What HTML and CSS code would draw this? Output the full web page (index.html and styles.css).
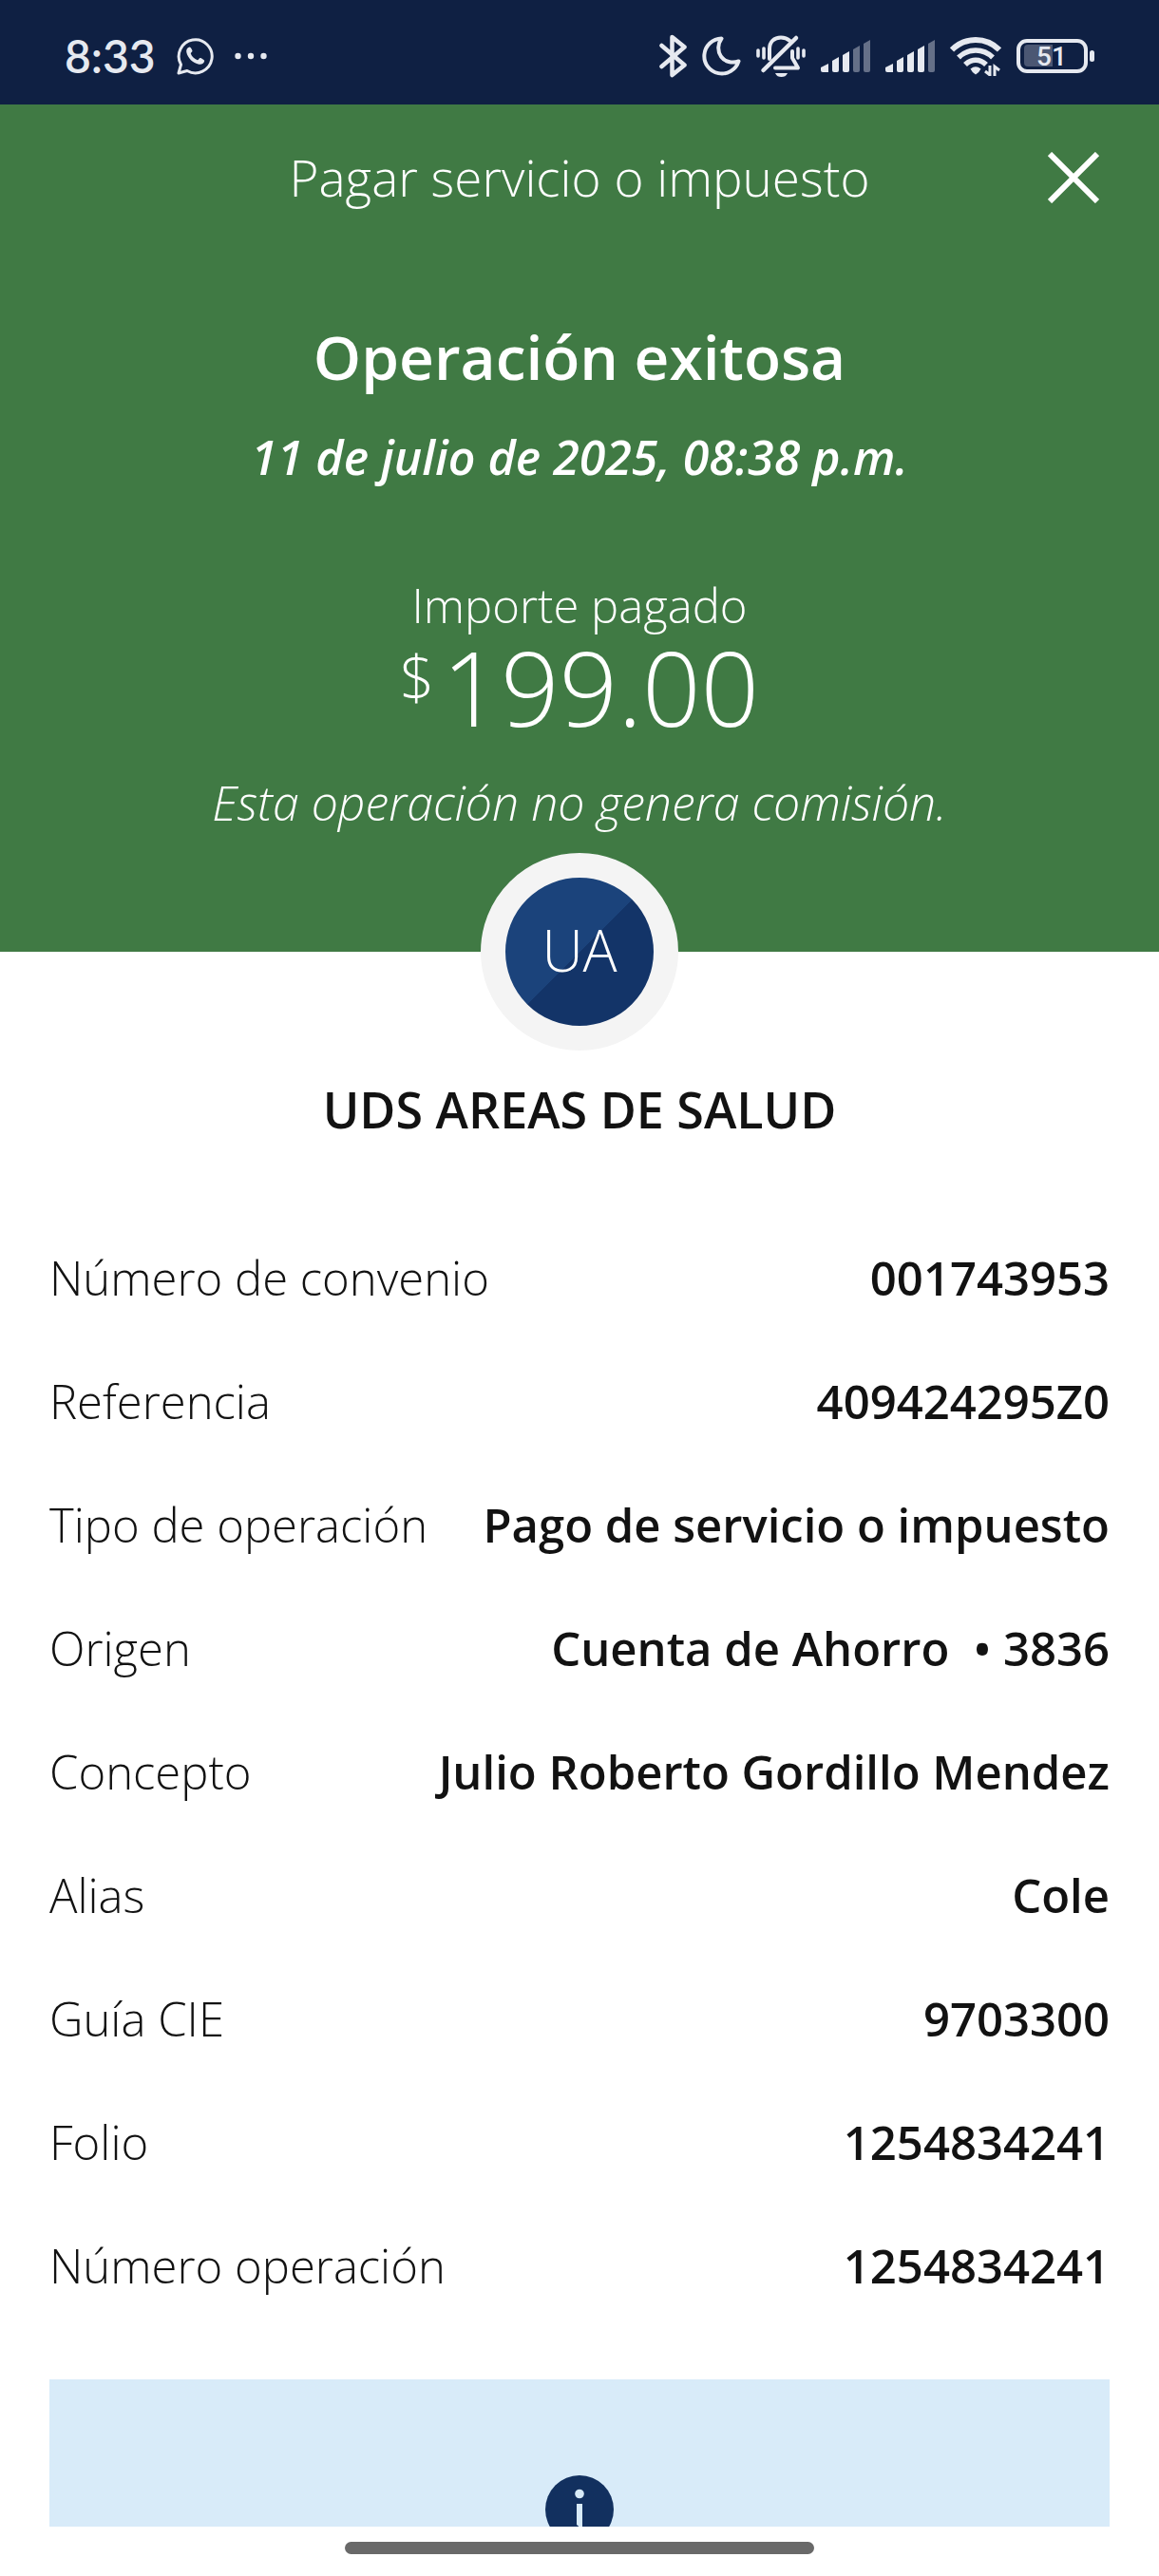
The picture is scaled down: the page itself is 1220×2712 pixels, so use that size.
FILE: index.html
```html
<!DOCTYPE html>
<html lang="es">
<head>
    <meta charset="UTF-8">
    <meta name="viewport" content="width=device-width, initial-scale=1.0">
    <title>Pagar servicio o impuesto</title>
    <link rel="stylesheet" href="styles.css">
</head>
<body>
    <div class="screen">
        <div class="status-bar">
            <div class="status-left">
                <span class="clock">8:33</span>
                <!-- WhatsApp -->
                <svg width="39" height="40" viewBox="0 0 39 40" fill="none">
                    <path d="M2 38L4.5 29A17.5 17.5 0 1 1 11 35.5Z" stroke="currentColor" stroke-width="3" stroke-linejoin="round"/>
                    <path d="M13.5 10.5C11 11 9.8 13.5 10.3 16C11.5 22 17 27.5 23.5 28.8C26.5 29.2 29 27.5 29.2 25C29.2 24 25.5 21.8 24.5 22C23.5 22.3 22.8 24.5 21.8 24.3C18.5 23 16 20.5 14.8 17.5C14.6 16.5 16.7 15.7 16.5 14.5C16.3 13.5 14.7 10.3 13.5 10.5Z" fill="currentColor"/>
                </svg>
                <svg class="dots" width="34" height="8" viewBox="0 0 34 8" fill="currentColor">
                    <circle cx="3.5" cy="4" r="3.2"/>
                    <circle cx="17" cy="4" r="3.2"/>
                    <circle cx="30.5" cy="4" r="3.2"/>
                </svg>
            </div>
            <div class="status-right">
                <!-- Bluetooth -->
                <svg width="29" height="46" viewBox="0 0 29 46" fill="none" stroke="currentColor" stroke-width="4.5" stroke-linecap="round" stroke-linejoin="round">
                    <path d="M2.5 12L26.5 32.5L13.5 43V3L26.5 13.5L2.5 34"/>
                </svg>
                <!-- Do not disturb -->
                <svg width="41" height="42" viewBox="0 0 41 42" fill="none" stroke="currentColor" stroke-width="4" stroke-linejoin="round">
                    <path d="M20.5 2.5A18.5 18.5 0 1 0 38.5 26.5C31.5 29 24 27 20 21.5C16 15.5 16.5 8 20.5 2.5Z"/>
                </svg>
                <!-- Muted bell -->
                <svg width="52" height="46" viewBox="0 0 52 46" fill="none" stroke="currentColor" stroke-linecap="round" stroke-linejoin="round">
                    <path d="M14 26V15.5C14 8 19 3.5 26 3.5C30 3.5 33 4.8 35.5 7" stroke-width="4"/>
                    <path d="M38 18V25L44 35.5H20" stroke-width="4"/>
                    <path d="M7.5 38L42 4" stroke-width="4.5"/>
                    <path d="M20 41H33C31.5 44 29.5 45 26.5 45C23.5 45 21.5 44 20 41Z" fill="currentColor" stroke="none"/>
                    <path d="M2 17V23M8 15V25M44 15V25M50 17V23" stroke-width="3.6"/>
                </svg>
                <!-- SIM 1 signal -->
                <svg width="52" height="34" viewBox="0 0 52 34" fill="currentColor">
                    <path d="M0 29L8 25V34H2Q0 34 0 32Z"/>
                    <path d="M12 22L19 18V32Q19 34 17 34H14Q12 34 12 32Z"/>
                    <path d="M23 16L30 12V32Q30 34 28 34H25Q23 34 23 32Z"/>
                    <path class="off" d="M34 10L41 6V32Q41 34 39 34H36Q34 34 34 32Z"/>
                    <path class="off" d="M45 4L52 0V32Q52 34 50 34H47Q45 34 45 32Z"/>
                </svg>
                <!-- SIM 2 signal -->
                <svg width="52" height="34" viewBox="0 0 52 34" fill="currentColor">
                    <path d="M0 29L8 25V34H2Q0 34 0 32Z"/>
                    <path d="M12 22L19 18V32Q19 34 17 34H14Q12 34 12 32Z"/>
                    <path d="M23 16L30 12V32Q30 34 28 34H25Q23 34 23 32Z"/>
                    <path d="M34 10L41 6V32Q41 34 39 34H36Q34 34 34 32Z"/>
                    <path class="off" d="M45 4L52 0V32Q52 34 50 34H47Q45 34 45 32Z"/>
                </svg>
                <!-- Wi-Fi -->
                <svg width="54" height="41" viewBox="0 0 54 41" fill="none" stroke="currentColor">
                    <path d="M2 13.5C16 -0.5 38 -0.5 52 13.5" stroke-width="6"/>
                    <path d="M9 21.5C19 11.5 35 11.5 45 21.5" stroke-width="5.5"/>
                    <path d="M16 29C22.5 22.5 31.5 22.5 38 29" stroke-width="5.5"/>
                    <path d="M21.5 33.5Q27 29 32.5 33.5Q31 37 27 39.5Q23 37 21.5 33.5Z" fill="currentColor" stroke="none"/>
                    <path d="M42 30V40L37 36M47 41V31L52 35" stroke-width="3"/>
                </svg>
                <!-- Battery -->
                <svg class="battery" width="82" height="36" viewBox="0 0 82 36">
                    <rect x="2" y="2" width="71" height="32" rx="9" fill="none" stroke="currentColor" stroke-width="4"/>
                    <path class="level" d="M12 6H38V29H12Q8 29 8 25V10Q8 6 12 6Z"/>
                    <rect x="77" y="12" width="5" height="12" rx="2.5" fill="currentColor"/>
                    <text x="37" y="28" text-anchor="middle" fill="currentColor">51</text>
                </svg>
            </div>
        </div>

        <div class="content">
            <div class="hero">
                <div class="title-bar">
                    <h1>Pagar servicio o impuesto</h1>
                    <button type="button" class="close-btn" aria-label="Cerrar">
                        <svg width="54" height="54" viewBox="0 0 54 54" fill="none" stroke="currentColor" stroke-width="6">
                            <path d="M2 2L52 52M52 2L2 52"/>
                        </svg>
                    </button>
                </div>
                <h2>Operación exitosa</h2>
                <p class="date">11 de julio de 2025, 08:38 p.m.</p>
                <p class="amount-label">Importe pagado</p>
                <p class="amount"><span class="currency">$</span>199.00</p>
                <p class="fee">Esta operación no genera comisión.</p>
            </div>

            <div class="avatar">UA</div>
            <h3>UDS AREAS DE SALUD</h3>

            <dl class="details">
                <div class="row"><dt>Número de convenio</dt><dd>001743953</dd></div>
                <div class="row"><dt>Referencia</dt><dd>409424295Z0</dd></div>
                <div class="row"><dt>Tipo de operación</dt><dd>Pago de servicio o impuesto</dd></div>
                <div class="row"><dt>Origen</dt><dd>Cuenta de Ahorro &nbsp;• 3836</dd></div>
                <div class="row"><dt>Concepto</dt><dd>Julio Roberto Gordillo Mendez</dd></div>
                <div class="row"><dt>Alias</dt><dd>Cole</dd></div>
                <div class="row"><dt>Guía CIE</dt><dd>9703300</dd></div>
                <div class="row"><dt>Folio</dt><dd>1254834241</dd></div>
                <div class="row"><dt>Número operación</dt><dd>1254834241</dd></div>
            </dl>

            <div class="info-box">
                <svg width="72" height="72" viewBox="0 0 72 72">
                    <circle class="info-disc" cx="36" cy="36" r="36"/>
                    <circle class="info-mark" cx="36" cy="19.5" r="4.8"/>
                    <path class="info-mark" d="M33 30H39V56H36Q36 54 33 52Z"/>
                </svg>
            </div>
        </div>

        <div class="nav-bar"><div class="nav-pill"></div></div>
    </div>
</body>
</html>
```
FILE: styles.css
```css
:root {
    --navy: #0f2043;
    --green: #407a44;
    --blue: #12305f;
    --text: #121212;
    --info: #d8ebf9;
}

* {
    box-sizing: border-box;
    margin: 0;
    padding: 0;
}

body {
    font-family: 'Open Sans', sans-serif;
    font-size: 49px;
    font-weight: 300;
    line-height: 64px;
    background-color: white;
    color: var(--text);
}

svg {
    display: block;
    flex-shrink: 0;
}

.screen {
    display: flex;
    flex-direction: column;
    height: 100vh;
}

/* Status bar */
.status-bar {
    display: flex;
    align-items: center;
    justify-content: space-between;
    flex-shrink: 0;
    height: 110px;
    padding: 8px 68px 0;
    background-color: var(--navy);
    color: #e6e9f0;
}

.status-left {
    display: flex;
    align-items: center;
    gap: 22px;
}

.status-right {
    display: flex;
    align-items: center;
    gap: 16px;
}

.clock {
    font-family: Lato, sans-serif;
    font-size: 48px;
    font-weight: 600;
}

.off {
    opacity: 0.4;
}

.battery {
    font-family: Roboto, sans-serif;
    font-size: 28px;
    font-weight: 500;
}

.level {
    fill: #4b5773;
}

/* Scrolling content */
.content {
    flex: 1;
    min-height: 0;
    overflow: hidden;
}

.hero {
    padding-bottom: 125px;
    background-color: var(--green);
    color: white;
    text-align: center;
}

.title-bar {
    display: grid;
    grid-template-columns: 1fr auto 1fr;
    align-items: center;
    height: 150px;
    padding: 4px 63px 0;
}

h1 {
    grid-column: 2;
    font-size: 53px;
    font-weight: 300;
}

.close-btn {
    justify-self: end;
    border: none;
    background: none;
    color: white;
    cursor: pointer;
}

h2 {
    margin-top: 72px;
    font-size: 64px;
    font-weight: 600;
    line-height: 88px;
}

.date {
    margin-top: 29px;
    font-size: 50px;
    font-style: italic;
    font-weight: 600;
}

.amount-label {
    margin-top: 92px;
}

.amount {
    display: flex;
    justify-content: center;
    gap: 8px;
    font-size: 108px;
    line-height: 110px;
}

.currency {
    font-size: 64px;
    line-height: 88px;
}

.fee {
    margin-top: 34px;
    font-size: 50px;
    font-style: italic;
}

.avatar {
    display: flex;
    align-items: center;
    justify-content: center;
    position: relative;
    width: 208px;
    height: 208px;
    margin: -104px auto 30px;
    padding-bottom: 4px;
    border: 26px solid #f4f4f4;
    border-radius: 50%;
    background: linear-gradient(135deg, #1b437b 50%, #133468 50%);
    background-origin: border-box;
    color: white;
    font-size: 60px;
}

h3 {
    font-size: 52px;
    font-weight: 600;
    text-align: center;
}

.details {
    margin-top: 80px;
    padding: 0 52px;
}

.row {
    display: flex;
    align-items: center;
    justify-content: space-between;
    height: 130px;
}

dd {
    font-weight: 600;
    text-align: right;
}

.info-box {
    display: flex;
    justify-content: center;
    margin: 55px 52px 0;
    padding: 101px 40px;
    background-color: var(--info);
}

.info-disc {
    fill: var(--blue);
}

.info-mark {
    fill: var(--info);
}

/* Gesture bar */
.nav-bar {
    display: flex;
    justify-content: center;
    flex-shrink: 0;
    height: 52px;
    padding-top: 16px;
    background-color: white;
}

.nav-pill {
    width: 494px;
    height: 13px;
    border-radius: 7px;
    background-color: #696969;
}
```
